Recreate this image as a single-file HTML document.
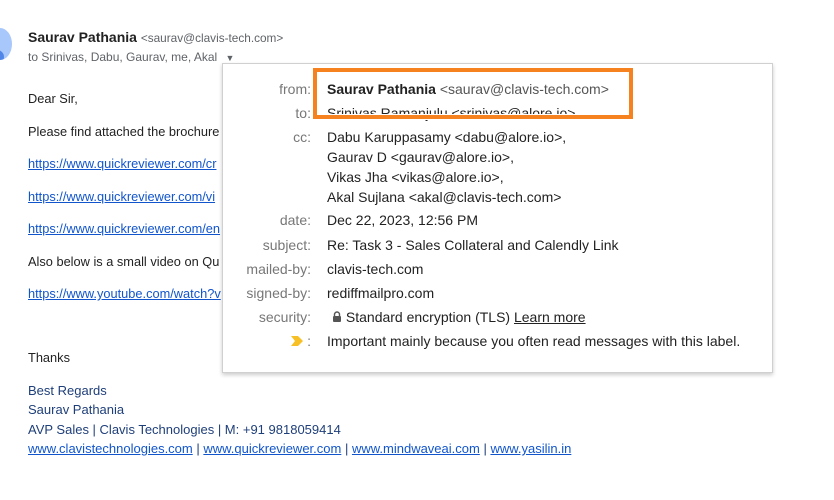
<!DOCTYPE html>
<html><head><meta charset="utf-8"><style>
body{margin:0;width:834px;height:500px;background:#fff;font-family:"Liberation Sans",Arial,sans-serif;position:relative;overflow:hidden;color:#222}
.a{position:absolute;white-space:nowrap}
.b{font-size:12.8px;color:#222}
.l{color:#1155cc;text-decoration:underline}
.s{color:#1f3f7a;font-size:13px}
.pop{position:absolute;left:222px;top:63px;width:549px;height:308px;background:#fff;border:1px solid #d0d0d0;box-shadow:0 2px 4px rgba(0,0,0,.2)}
.lb{position:absolute;right:calc(834px - 311px);color:#777;font-size:14px;text-align:right;white-space:nowrap}
.v{position:absolute;left:327px;font-size:14px;color:#222;white-space:nowrap}
</style></head><body>
<div class="a" style="left:-12px;top:28px;width:24px;height:32px;border-radius:50%;background:#a8c7fa;overflow:hidden"><div style="position:absolute;left:2px;top:22px;width:14px;height:14px;border-radius:50%;background:#4f86e8"></div></div>
<div class="a" style="left:28px;top:29px;font-size:14px"><b style="color:#222">Saurav Pathania</b> <span style="font-size:11.8px;color:#5f6368">&lt;saurav@clavis-tech.com&gt;</span></div>
<div class="a" style="left:28px;top:50px;font-size:12px;color:#5f6368">to Srinivas, Dabu, Gaurav, me, Akal <span style="font-size:9px;margin-left:5px">▼</span></div>
<div class="a b" style="left:28px;top:91px">Dear Sir,</div>
<div class="a b" style="left:28px;top:124px">Please find attached the brochure</div>
<div class="a b l" style="left:28px;top:156px">https://www.quickreviewer.com/cr</div>
<div class="a b l" style="left:28px;top:189px">https://www.quickreviewer.com/vi</div>
<div class="a b l" style="left:28px;top:221px">https://www.quickreviewer.com/en</div>
<div class="a b" style="left:28px;top:254px">Also below is a small video on Qu</div>
<div class="a b l" style="left:28px;top:286px">https://www.youtube.com/watch?v</div>
<div class="a b" style="left:28px;top:350px">Thanks</div>
<div class="a s" style="left:28px;top:383px">Best Regards</div>
<div class="a s" style="left:28px;top:402px">Saurav Pathania</div>
<div class="a s" style="left:28px;top:422px">AVP Sales | Clavis Technologies | M: +91 9818059414</div>
<div class="a s" style="left:28px;top:441px"><span class="l">www.clavistechnologies.com</span> | <span class="l">www.quickreviewer.com</span> | <span class="l">www.mindwaveai.com</span> | <span class="l">www.yasilin.in</span></div>
<div class="pop"></div>
<div class="lb" style="top:81px">from:</div><div class="v" style="top:81px"><b>Saurav Pathania</b> <span style="color:#555">&lt;saurav@clavis-tech.com&gt;</span></div>
<div class="lb" style="top:105px">to:</div><div class="v" style="top:105px">Srinivas Ramanjulu &lt;srinivas@alore.io&gt;</div>
<div class="a" style="left:316px;top:114px;width:316px;height:6px;background:#fff"></div>
<div class="a" style="left:313px;top:68px;width:312px;height:43px;border:4px solid #f5811f"></div>
<div class="lb" style="top:129px">cc:</div>
<div class="v" style="top:127px;line-height:20px">Dabu Karuppasamy &lt;dabu@alore.io&gt;,<br>Gaurav D &lt;gaurav@alore.io&gt;,<br>Vikas Jha &lt;vikas@alore.io&gt;,<br>Akal Sujlana &lt;akal@clavis-tech.com&gt;</div>
<div class="lb" style="top:212px">date:</div><div class="v" style="top:212px">Dec 22, 2023, 12:56 PM</div>
<div class="lb" style="top:237px">subject:</div><div class="v" style="top:237px">Re: Task 3 - Sales Collateral and Calendly Link</div>
<div class="lb" style="top:261px">mailed-by:</div><div class="v" style="top:261px">clavis-tech.com</div>
<div class="lb" style="top:285px">signed-by:</div><div class="v" style="top:285px">rediffmailpro.com</div>
<div class="lb" style="top:309px">security:</div>
<div class="v" style="top:309px;left:332px"><svg width="10" height="12" viewBox="0 0 10 12" style="vertical-align:-1px"><path d="M2.5 5V3.5a2.5 2.5 0 0 1 5 0V5" fill="none" stroke="#555" stroke-width="1.4"/><rect x="1" y="5" width="8" height="6" rx="1" fill="#555"/></svg> Standard encryption (TLS) <span style="text-decoration:underline">Learn more</span></div>
<div class="lb" style="top:333px"><svg width="12" height="10" viewBox="0 0 12 10" style="vertical-align:0"><path d="M0 0H7L12 5L7 10H0L4 5Z" fill="#f6c026"/></svg> :</div>
<div class="v" style="top:333px">Important mainly because you often read messages with this label.</div>
</body></html>
